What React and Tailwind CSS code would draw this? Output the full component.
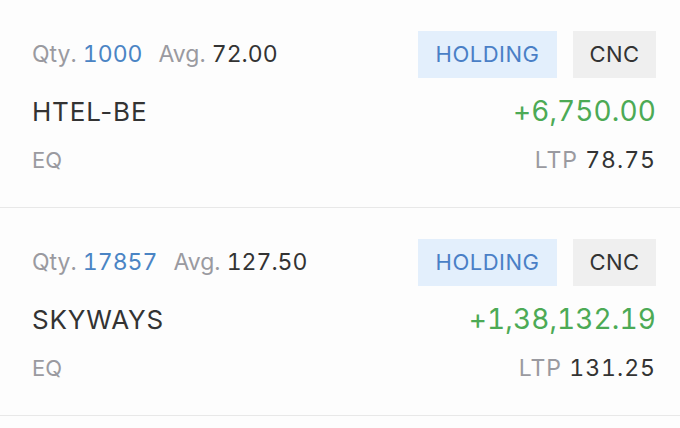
import React from 'react';

const positions = [
  { qty: '1000', avg: '72.00', symbol: 'HTEL-BE', pnl: '+6,750.00', ltp: '78.75' },
  { qty: '17857', avg: '127.50', symbol: 'SKYWAYS', pnl: '+1,38,132.19', ltp: '131.25' },
];

const PositionRow = ({ item }) => (
  <div className="pt-[31px] pb-[32px] pl-[32px] pr-[24px] border-b border-[#e8e8e8]">
    {/* top line */}
    <div className="h-[47px] flex items-center justify-between">
      <div className="text-[23px] tracking-[0px] tabular-nums">
        <span className="text-[#9a9aa0]">Qty. </span>
        <span className="text-[#4a84c4]">{item.qty}</span>
        <span className="text-[#9a9aa0] ml-[16px]">Avg. </span>
        <span className="text-[#333]">{item.avg}</span>
      </div>
      <div className="flex gap-[16px] h-full">
        <span className="w-[139px] h-full flex items-center justify-center bg-[#e3effc] text-[#4a7fc6] text-[22px] tracking-[0.5px]">
          HOLDING
        </span>
        <span className="w-[83px] h-full flex items-center justify-center bg-[#efefef] text-[#333] text-[22px] tracking-[0.5px]">
          CNC
        </span>
      </div>
    </div>
    {/* symbol & pnl */}
    <div className="mt-[16px] h-[34px] flex items-center justify-between">
      <span className="text-[26px] text-[#333] tracking-[0.8px]">{item.symbol}</span>
      <span className="text-[28px] text-[#4caa55] tracking-[0.1px] tabular-nums">{item.pnl}</span>
    </div>
    {/* exchange & ltp */}
    <div className="mt-[17px] h-[30px] flex items-center justify-between">
      <span className="text-[22px] text-[#9a9aa0]">EQ</span>
      <span className="text-[23px] tracking-[1px] tabular-nums">
        <span className="text-[#9a9aa0]">LTP </span>
        <span className="text-[#333]">{item.ltp}</span>
      </span>
    </div>
  </div>
);

export default function App() {
  return (
    <div className="w-[680px] h-[428px] overflow-hidden bg-[#fdfdfd]" style={{ fontFamily: 'Inter, "Noto Sans", sans-serif' }}>
      {positions.map((p) => (
        <PositionRow key={p.symbol} item={p} />
      ))}
    </div>
  );
}
